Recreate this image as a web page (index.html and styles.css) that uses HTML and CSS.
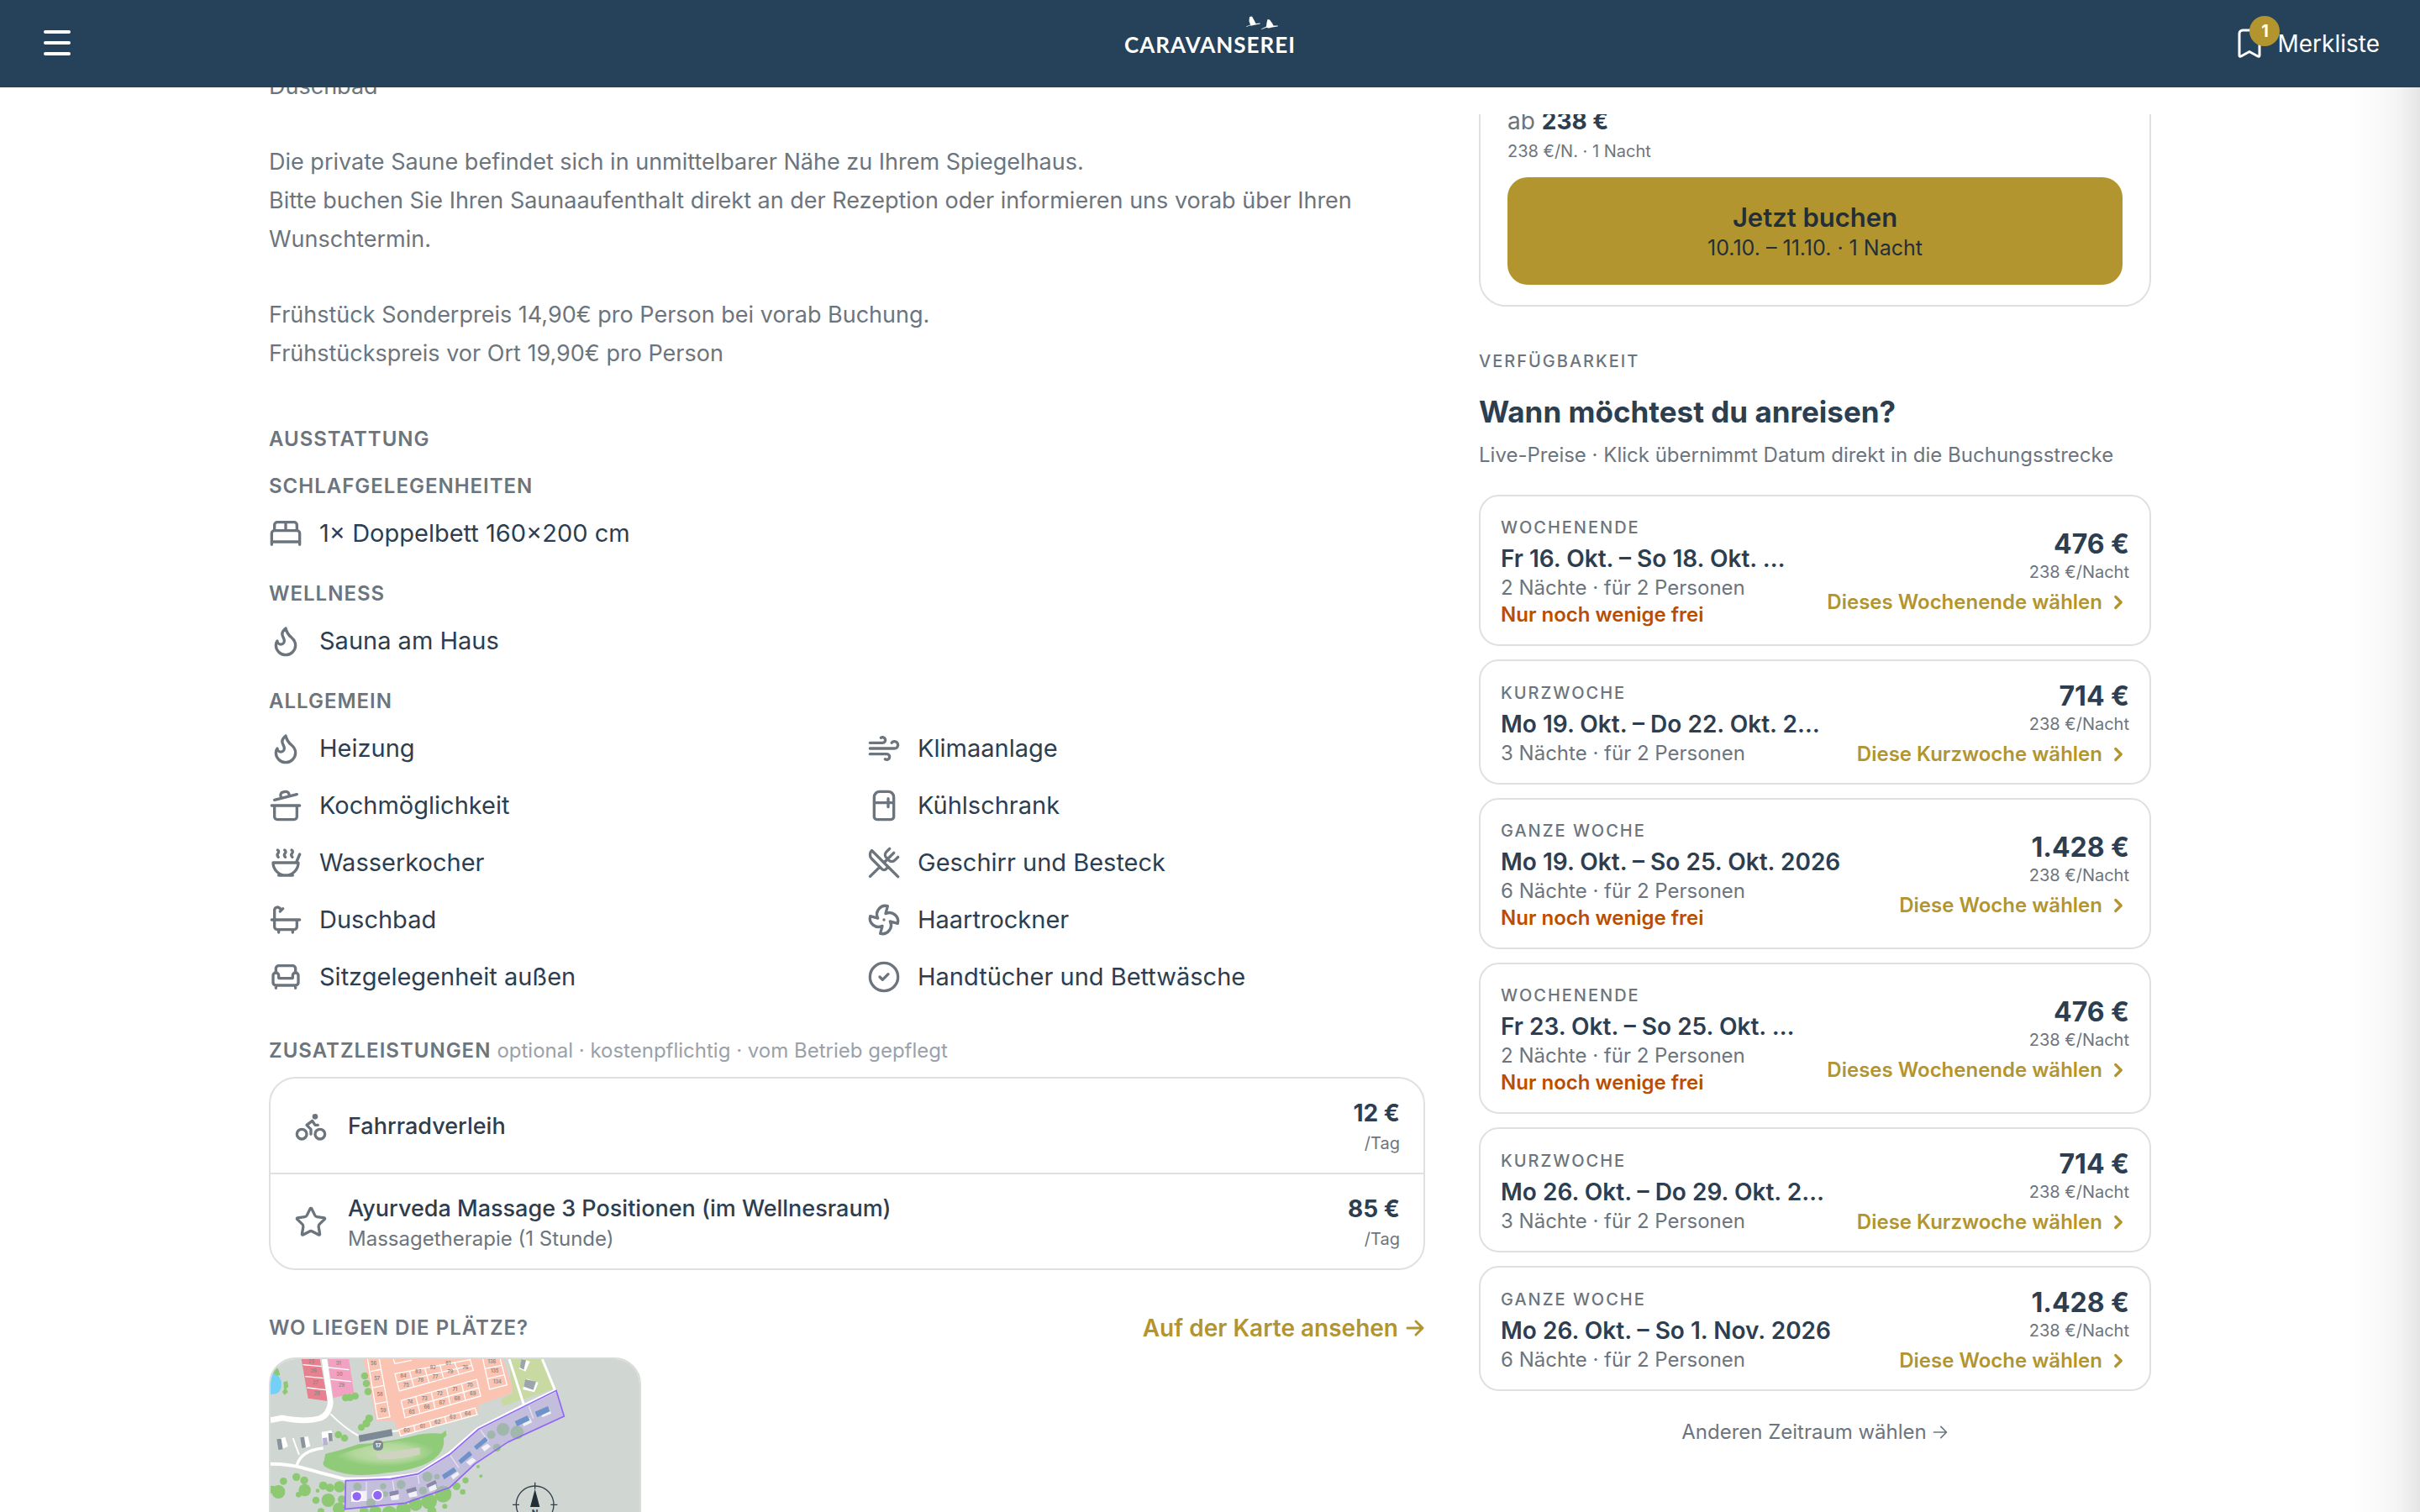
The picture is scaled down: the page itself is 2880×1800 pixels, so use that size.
FILE: index.html
```html
<!DOCTYPE html>
<html lang="de">
<head>
<meta charset="utf-8">
<meta name="viewport" content="width=device-width, initial-scale=1">
<title>Spiegelhaus – Caravanserei</title>
<link rel="stylesheet" href="styles.css">
</head>
<body>
<svg class="sprite" aria-hidden="true">
  <symbol id="bed" viewBox="0 0 24 24"><path d="M2 20v-8a2 2 0 0 1 2-2h16a2 2 0 0 1 2 2v8M4 10V6a2 2 0 0 1 2-2h12a2 2 0 0 1 2 2v4M12 4v6M2 18h20"/></symbol>
  <symbol id="flame" viewBox="0 0 24 24"><path d="M12 3q1 4 4 6.5t3 5.5a1 1 0 0 1-14 0 5 5 0 0 1 1-3 1 1 0 0 0 5 0c0-2-1.5-3-1.5-5q0-2 2.5-4"/></symbol>
  <symbol id="pot" viewBox="0 0 24 24"><path d="M2 12h20M20 12v8a2 2 0 0 1-2 2H6a2 2 0 0 1-2-2v-8M4 8l16-4M8.86 6.78l-.45-1.81a2 2 0 0 1 1.45-2.43l1.94-.48a2 2 0 0 1 2.43 1.46l.45 1.8"/></symbol>
  <symbol id="soup" viewBox="0 0 24 24"><path d="M12 21a9 9 0 0 0 9-9H3a9 9 0 0 0 9 9ZM7 21h10M19.5 12 22 6M16.25 3c.27.1.8.53.75 1.36-.06.83-.93 1.2-1 2.02-.05.78.34 1.24.73 1.62M11.25 3c.27.1.8.53.74 1.36-.05.83-.93 1.2-.98 2.02-.06.78.33 1.24.72 1.62M6.25 3c.27.1.8.53.75 1.36-.06.83-.93 1.2-1 2.02-.05.78.34 1.24.74 1.62"/></symbol>
  <symbol id="bath" viewBox="0 0 24 24"><path d="M10 4 8 6M17 19v2M2 12h20M7 19v2M9 5 7.621 3.621A2.121 2.121 0 0 0 4 5v12a2 2 0 0 0 2 2h12a2 2 0 0 0 2-2v-5"/></symbol>
  <symbol id="armchair" viewBox="0 0 24 24"><path d="M19 9V6a2 2 0 0 0-2-2H7a2 2 0 0 0-2 2v3M3 16a2 2 0 0 0 2 2h14a2 2 0 0 0 2-2v-5a2 2 0 0 0-4 0v1.5a.5.5 0 0 1-.5.5h-9a.5.5 0 0 1-.5-.5V11a2 2 0 0 0-4 0zM5 18v2M19 18v2"/></symbol>
  <symbol id="wind" viewBox="0 0 24 24"><path d="M12.8 19.6A2 2 0 1 0 14 16H2M17.5 8a2.5 2.5 0 1 1 2 4H2M9.8 4.4A2 2 0 1 1 11 8H2"/></symbol>
  <symbol id="fridge" viewBox="0 0 24 24"><path d="M5 6a4 4 0 0 1 4-4h6a4 4 0 0 1 4 4v14a2 2 0 0 1-2 2H7a2 2 0 0 1-2-2ZM5 10h14M15 7v6"/></symbol>
  <symbol id="cutlery" viewBox="0 0 24 24"><path d="m16 2-2.3 2.3a3 3 0 0 0 0 4.2l1.8 1.8a3 3 0 0 0 4.2 0L22 8M15 15 3.3 3.3a4.2 4.2 0 0 0 0 6l7.3 7.3c.7.7 2 .7 2.8 0L15 15Zm0 0 7 7M2.1 21.8l6.4-6.3M19 5l-7 7"/></symbol>
  <symbol id="fan" viewBox="0 0 24 24"><path d="M10.827 16.379a6.082 6.082 0 0 1-8.618-7.002l5.412 1.45a6.082 6.082 0 0 1 7.002-8.618l-1.45 5.412a6.082 6.082 0 0 1 8.618 7.002l-5.412-1.45a6.082 6.082 0 0 1-7.002 8.618l1.45-5.412ZM12 12v.01"/></symbol>
  <symbol id="check" viewBox="0 0 24 24"><circle cx="12" cy="12" r="10"/><path d="m9 12 2 2 4-4"/></symbol>
  <symbol id="bike" viewBox="0 0 24 24"><circle cx="18.5" cy="17.5" r="3.5"/><circle cx="5.5" cy="17.5" r="3.5"/><circle cx="15" cy="5" r="1"/><path d="M12 17.5V14l-3-3 4-3 2 3h2"/></symbol>
  <symbol id="star" viewBox="0 0 24 24"><path d="M11.525 2.295a.53.53 0 0 1 .95 0l2.31 4.679a2.123 2.123 0 0 0 1.595 1.16l5.166.756a.53.53 0 0 1 .294.904l-3.736 3.638a2.123 2.123 0 0 0-.611 1.878l.882 5.14a.53.53 0 0 1-.771.56l-4.618-2.428a2.122 2.122 0 0 0-1.973 0L6.396 21.01a.53.53 0 0 1-.77-.56l.881-5.139a2.122 2.122 0 0 0-.611-1.879L2.16 9.795a.53.53 0 0 1 .294-.906l5.165-.755a2.122 2.122 0 0 0 1.597-1.16z"/></symbol>
  <symbol id="chevron" viewBox="0 0 24 24"><path d="m9 18 6-6-6-6"/></symbol>
  <symbol id="arrow" viewBox="0 0 24 24"><path d="M3 12h18M13 4l8 8-8 8"/></symbol>
</svg>

<header class="topbar">
  <button class="menu-button" type="button" aria-label="Menü">
    <svg class="menu-icon" viewBox="0 0 40 40"><path d="M6 6h28M6 19h28M6 32h28"/></svg>
  </button>
  <a class="logo" href="#">
    <svg class="cranes" viewBox="0 0 40 16" aria-hidden="true">
      <path d="M1 12.500 6 10.500 4.500 6 5 1 8 .5 10.500 5 12.500 9 18 8.500 17.500 9.500 12 10.500 8 11.500 5 11.500 1.500 13Z"/>
      <path d="M19 15.500 25 12.500 25.500 8 26.500 4 29 4.500 32 8.500 33.500 11.500 39 11.500 38.500 12.500 32 13.500 28 14.500 25 13.800 19.500 16Z"/>
    </svg>
    <span class="wordmark">CARAVANSEREI</span>
  </a>
  <a class="watchlist" href="#">
    <span class="bookmark">
      <svg viewBox="0 0 28 36" aria-hidden="true"><path d="M2 6a4 4 0 0 1 4-4h16a4 4 0 0 1 4 4v26q0 2-2 1l-10-5.500L4 33q-2 1-2-1Z"/></svg>
      <span class="badge">1</span>
    </span>
    <span>Merkliste</span>
  </a>
</header>

<main class="page">
  <section class="details">
    <div class="description">
      <p>Duschbad</p>
      <p>Die private Saune befindet sich in unmittelbarer Nähe zu Ihrem Spiegelhaus.<br>Bitte buchen Sie Ihren Saunaaufenthalt direkt an der Rezeption oder informieren uns vorab über Ihren Wunschtermin.</p>
      <p>Frühstück Sonderpreis 14,90€ pro Person bei vorab Buchung.<br>Frühstückspreis vor Ort 19,90€ pro Person</p>
    </div>

    <section class="amenities">
      <h2 class="caps">AUSSTATTUNG</h2>
      <h3 class="caps">SCHLAFGELEGENHEITEN</h3>
      <ul class="features">
        <li><svg class="icon"><use href="#bed"/></svg>1× Doppelbett 160×200 cm</li>
      </ul>
      <h3 class="caps">WELLNESS</h3>
      <ul class="features">
        <li><svg class="icon"><use href="#flame"/></svg>Sauna am Haus</li>
      </ul>
      <h3 class="caps">ALLGEMEIN</h3>
      <ul class="features">
        <li><svg class="icon"><use href="#flame"/></svg>Heizung</li>
        <li><svg class="icon"><use href="#wind"/></svg>Klimaanlage</li>
        <li><svg class="icon"><use href="#pot"/></svg>Kochmöglichkeit</li>
        <li><svg class="icon"><use href="#fridge"/></svg>Kühlschrank</li>
        <li><svg class="icon"><use href="#soup"/></svg>Wasserkocher</li>
        <li><svg class="icon"><use href="#cutlery"/></svg>Geschirr und Besteck</li>
        <li><svg class="icon"><use href="#bath"/></svg>Duschbad</li>
        <li><svg class="icon"><use href="#fan"/></svg>Haartrockner</li>
        <li><svg class="icon"><use href="#armchair"/></svg>Sitzgelegenheit außen</li>
        <li><svg class="icon"><use href="#check"/></svg>Handtücher und Bettwäsche</li>
      </ul>
    </section>

    <section class="extras">
      <h2 class="caps">ZUSATZLEISTUNGEN <span class="note">optional · kostenpflichtig · vom Betrieb gepflegt</span></h2>
      <ul class="extras-list">
        <li>
          <svg class="icon"><use href="#bike"/></svg>
          <div class="extra-text"><strong>Fahrradverleih</strong></div>
          <div class="extra-price"><b>12 €</b><small>/Tag</small></div>
        </li>
        <li>
          <svg class="icon"><use href="#star"/></svg>
          <div class="extra-text"><strong>Ayurveda Massage 3 Positionen (im Wellnesraum)</strong><span>Massagetherapie (1 Stunde)</span></div>
          <div class="extra-price"><b>85 €</b><small>/Tag</small></div>
        </li>
      </ul>
    </section>

    <section class="location">
      <div class="location-head">
        <h2 class="caps">WO LIEGEN DIE PLÄTZE?</h2>
        <a href="#">Auf der Karte ansehen <svg class="arrow"><use href="#arrow"/></svg></a>
      </div>
      <a class="map" href="#" aria-label="Lageplan">
        <svg viewBox="66 234 1317 900" aria-hidden="true">
          <defs>
            <radialGradient id="meadow"><stop offset="0" stop-color="#c3dcae"/><stop offset=".6" stop-color="#b3d79c"/><stop offset="1" stop-color="#8fcb78"/></radialGradient>
          </defs>
          <rect x="66" y="234" width="1317" height="900" fill="#d0d7d2"/>
          <!-- pond -->
          <path d="M66 268q30 20 38 45 4 30-12 42-12 6-26 4Z" fill="#74d0f7"/>
          <path d="M66 262l20-4 10 18 4 16-12 0-22-12ZM112 316l14-4 4 20-8 8 6 12-12 10-8-10 6-10Z" fill="#8dc873"/>
          <!-- red and pink pitches -->
          <path d="M176 234h66l28 150-70-10Z" fill="#e8818f"/>
          <path d="M270 234h76l18 122-74 16Z" fill="#f3a1c2"/>
          <path d="M182 254l66 6M190 296l64 6M196 336l68 8M272 264l74 8M280 306l74 8" stroke="#fff" stroke-width="4"/>
          <!-- orange field -->
          <path d="M398 234H896L928 330Q932 352 912 362L806 398 808 424 796 436 524 510 508 452 444 454Z" fill="#fac3b2"/>
          <g fill="none" stroke="#fff" stroke-width="4">
            <path d="M412 234 448 448 492 440 454 234M424 278 462 270M432 336 472 328M440 394 482 386"/>
            <path d="M504 234 510 250 570 238M510 286 778 236 790 274 526 348ZM518 316 784 256M562 276 578 334M616 264 632 318M670 252 684 304M722 244 740 290"/>
            <path d="M532 382 802 306 816 366 546 444ZM540 412 810 336M584 368 600 428M640 352 654 414M694 336 708 398M748 322 762 380"/>
            <path d="M524 486 796 408 804 432 530 508ZM578 472 582 494M634 456 640 478M688 440 694 462M742 424 750 448"/>
            <path d="M824 234 848 342 910 326 886 234M832 268 892 256M840 304 902 290"/>
          </g>
          <g font-family="Inter, sans-serif" font-size="17" font-weight="600" fill="#8a8482" text-anchor="middle">
            <text x="434" y="254">56</text><text x="446" y="308">57</text><text x="456" y="366">58</text><text x="468" y="422">59</text>
            <text x="540" y="300">84</text><text x="593" y="284">83</text><text x="646" y="269">82</text><text x="700" y="256">81</text>
            <text x="550" y="332">75</text><text x="602" y="316">78</text><text x="654" y="302">77</text><text x="708" y="286">79</text><text x="762" y="271">76</text>
            <text x="564" y="394">74</text><text x="616" y="380">73</text><text x="670" y="364">72</text><text x="724" y="348">71</text><text x="778" y="334">70</text>
            <text x="570" y="428">65</text><text x="624" y="412">66</text><text x="678" y="396">67</text><text x="732" y="380">68</text><text x="788" y="364">69</text>
            <text x="552" y="495">60</text><text x="608" y="480">61</text><text x="662" y="464">62</text><text x="716" y="448">63</text><text x="770" y="434">64</text>
            <text x="856" y="250">136</text><text x="866" y="282">135</text><text x="876" y="320">134</text>
            <text x="212" y="250">25</text><text x="220" y="282">26</text><text x="226" y="324">27</text><text x="232" y="364">28</text>
            <text x="308" y="256">31</text><text x="312" y="294">30</text><text x="320" y="332">29</text>
          </g>
          <!-- lime area -->
          <path d="M916 234H1036L1078 340 896 402 888 378 930 356Z" fill="#c8d9a1"/>
          <path d="M954 268 966 234 992 242 976 278ZM966 342 980 304 1022 318 1008 352Z" fill="#fff"/>
          <path d="M956 264 962 234 978 238 970 272ZM976 306 1014 314 1004 344 970 332Z" fill="#9ba5ac"/>
          <!-- roads -->
          <g fill="none" stroke="#fff">
            <path d="M258 234 280 390Q274 436 240 446 190 460 108 444L66 452" stroke-width="20"/>
            <path d="M280 430Q330 480 380 508M500 492l22-2M146 516l22 60" stroke-width="6"/>
            <path d="M66 608Q130 608 180 622T330 662Q480 664 592 644L706 570 804 484 970 400 1084 346" stroke-width="12"/>
            <path d="M160 612Q176 560 254 552" stroke-width="10"/>
            <path d="M918 234 970 396M1036 234 1082 346" stroke-width="9"/>
          </g>
          <!-- meadow with service building -->
          <path d="M262 572Q320 560 380 538 480 530 560 512 620 494 676 500L692 488 694 506 684 516Q690 560 650 590 600 628 480 640 380 656 320 640 240 620 256 600Z" fill="#8fcb78"/>
          <path d="M292 582Q420 534 560 520 660 510 656 548 640 600 500 616 360 626 292 582Z" fill="url(#meadow)"/>
          <path d="M438 574Q520 560 598 550L600 574Q540 594 452 592Z" fill="#cfd3bf"/>
          <path d="M380 506 498 484 502 508 384 530Z" fill="#7d8994"/>
          <rect x="432" y="524" width="36" height="36" rx="14" fill="#7d8994"/>
          <text x="450" y="549" font-family="Inter, sans-serif" font-size="20" font-weight="700" fill="#fff" text-anchor="middle">17</text>
          <!-- small houses -->
          <path d="M96 520l22-8 10 34-22 10ZM176 514l24-4 8 36-24 6ZM248 494l36-6 6 34-38 14Z" fill="#fff"/>
          <path d="M88 520l16-2 6 38-16 2ZM172 514l14-2 6 38-14 2ZM272 498l14 0 2 28-14 2Z" fill="#8b949c"/>
          <path d="M252 516l16-2 2 26-16 2Z" fill="#b7b1d3"/>
          <!-- trees -->
          <g fill="#8dc873">
            <circle cx="402" cy="294" r="13"/><circle cx="408" cy="321" r="13"/><circle cx="414" cy="350" r="13"/>
            <circle cx="334" cy="372" r="13"/><circle cx="350" cy="371" r="13"/><circle cx="368" cy="366" r="13"/>
            <circle cx="418" cy="446" r="14"/><circle cx="408" cy="464" r="14"/><circle cx="390" cy="478" r="12"/>
            <circle cx="308" cy="504" r="13"/><circle cx="330" cy="516" r="13"/>
            <circle cx="158" cy="655" r="14"/><circle cx="112" cy="670" r="13"/><circle cx="186" cy="667" r="14"/><circle cx="94" cy="708" r="24"/><circle cx="72" cy="700" r="14"/>
            <circle cx="188" cy="702" r="22"/><circle cx="166" cy="718" r="10"/><circle cx="228" cy="738" r="13"/><circle cx="254" cy="686" r="15"/><circle cx="278" cy="694" r="15"/><circle cx="272" cy="738" r="24"/><circle cx="312" cy="690" r="20"/><circle cx="320" cy="735" r="14"/><circle cx="234" cy="704" r="7"/>
            <circle cx="246" cy="778" r="12"/><circle cx="310" cy="768" r="22"/><circle cx="400" cy="776" r="16"/><circle cx="440" cy="780" r="22"/><circle cx="490" cy="784" r="26"/><circle cx="540" cy="772" r="26"/><circle cx="584" cy="752" r="24"/><circle cx="632" cy="742" r="28"/><circle cx="682" cy="716" r="30"/><circle cx="642" cy="776" r="16"/><circle cx="688" cy="760" r="9"/>
            <circle cx="730" cy="688" r="14"/><circle cx="762" cy="667" r="11"/><circle cx="752" cy="708" r="10"/><circle cx="807" cy="618" r="6"/><circle cx="817" cy="652" r="6"/>
            <circle cx="854" cy="504" r="15"/><circle cx="896" cy="485" r="23"/><circle cx="946" cy="496" r="24"/><circle cx="874" cy="550" r="14"/>
            <circle cx="376" cy="690" r="15"/><circle cx="424" cy="748" r="17"/><circle cx="468" cy="688" r="11"/><circle cx="476" cy="716" r="10"/><circle cx="532" cy="682" r="16"/><circle cx="626" cy="654" r="18"/><circle cx="610" cy="704" r="14"/><circle cx="660" cy="654" r="10"/><circle cx="650" cy="690" r="12"/>
          </g>
          <!-- highlighted row of pitches -->
          <path d="M334 668 494 662 592 644 706 574 808 484 1086 346 1114 438 914 530 796 608 706 692 548 748 332 770Z" fill="#b6a5e6" fill-opacity=".5" stroke="#9166f4" stroke-width="5"/>
          <path d="M408 672v34M502 668l6 40M592 648l4 32M708 578l30 44M816 488l28 40M988 402l16 44" stroke="#e5e2f2" stroke-width="4"/>
          <g fill="#f3f1f8"><path d="M1030 424l32-14 6 18-32 14ZM962 456l30-12 8 16-30 14ZM818 550l22-14 12 10-22 18ZM764 602l22-16 14 10-22 18ZM710 652l24-16 6 10-22 18ZM630 690l24-12 6 20-26 10ZM556 710l30-8 4 22-28 4ZM492 718l32-6 0 24-26 2ZM354 708l56-4 0 36-56 4Z"/></g>
          <g fill="#6f93c9"><path d="M1010 422l46-20 8 18-46 22ZM938 456l44-20 10 16-46 22ZM792 546l40-34 10 12-40 34ZM736 596l40-34 10 14-40 32ZM678 648l42-28 10 14-44 30Z"/></g>
          <g fill="#8a8aa8"><path d="M622 682l32-16 6 12-34 16ZM550 700l34-10 4 14-34 10ZM490 708l32-6 2 14-32 8Z"/></g>
          <g fill="#9166f4" stroke="#fff" stroke-width="5"><circle cx="374" cy="724" r="18"/><circle cx="448" cy="720" r="18"/></g>
          <!-- compass -->
          <g fill="none" stroke="#34424d" stroke-width="4"><circle cx="1010" cy="754" r="67"/><path d="M1010 674v24M930 754h24M1066 754h24M1010 810v24"/></g>
          <path d="M1010 698 1027 762H993Z" fill="#232f38"/>
          <text x="1010" y="796" font-family="Inter, sans-serif" font-size="30" font-weight="700" fill="#34424d" text-anchor="middle">N</text>
        </svg>
      </a>
    </section>
  </section>

  <aside class="booking">
    <div class="offer">
      <p class="from">ab <b>238 €</b></p>
      <p class="rate">238 €/N. · 1 Nacht</p>
      <button class="book" type="button"><strong>Jetzt buchen</strong><span>10.10. – 11.10. · 1 Nacht</span></button>
    </div>

    <section class="availability">
      <p class="eyebrow">VERFÜGBARKEIT</p>
      <h2>Wann möchtest du anreisen?</h2>
      <p class="hint">Live-Preise · Klick übernimmt Datum direkt in die Buchungsstrecke</p>

      <div class="slots">
        <a class="slot" href="#">
          <div class="slot-info"><span class="kind">WOCHENENDE</span><strong>Fr 16. Okt. – So 18. Okt. 2026</strong><span>2 Nächte · für 2 Personen</span><em>Nur noch wenige frei</em></div>
          <div class="slot-price"><b>476 €</b><small>238 €/Nacht</small><span class="choose">Dieses Wochenende wählen<svg><use href="#chevron"/></svg></span></div>
        </a>
        <a class="slot" href="#">
          <div class="slot-info"><span class="kind">KURZWOCHE</span><strong>Mo 19. Okt. – Do 22. Okt. 2026</strong><span>3 Nächte · für 2 Personen</span></div>
          <div class="slot-price"><b>714 €</b><small>238 €/Nacht</small><span class="choose">Diese Kurzwoche wählen<svg><use href="#chevron"/></svg></span></div>
        </a>
        <a class="slot" href="#">
          <div class="slot-info"><span class="kind">GANZE WOCHE</span><strong>Mo 19. Okt. – So 25. Okt. 2026</strong><span>6 Nächte · für 2 Personen</span><em>Nur noch wenige frei</em></div>
          <div class="slot-price"><b>1.428 €</b><small>238 €/Nacht</small><span class="choose">Diese Woche wählen<svg><use href="#chevron"/></svg></span></div>
        </a>
        <a class="slot" href="#">
          <div class="slot-info"><span class="kind">WOCHENENDE</span><strong>Fr 23. Okt. – So 25. Okt. 2026</strong><span>2 Nächte · für 2 Personen</span><em>Nur noch wenige frei</em></div>
          <div class="slot-price"><b>476 €</b><small>238 €/Nacht</small><span class="choose">Dieses Wochenende wählen<svg><use href="#chevron"/></svg></span></div>
        </a>
        <a class="slot" href="#">
          <div class="slot-info"><span class="kind">KURZWOCHE</span><strong>Mo 26. Okt. – Do 29. Okt. 2026</strong><span>3 Nächte · für 2 Personen</span></div>
          <div class="slot-price"><b>714 €</b><small>238 €/Nacht</small><span class="choose">Diese Kurzwoche wählen<svg><use href="#chevron"/></svg></span></div>
        </a>
        <a class="slot" href="#">
          <div class="slot-info"><span class="kind">GANZE WOCHE</span><strong>Mo 26. Okt. – So 1. Nov. 2026</strong><span>6 Nächte · für 2 Personen</span></div>
          <div class="slot-price"><b>1.428 €</b><small>238 €/Nacht</small><span class="choose">Diese Woche wählen<svg><use href="#chevron"/></svg></span></div>
        </a>
      </div>
      <a class="other" href="#">Anderen Zeitraum wählen <svg class="arrow"><use href="#arrow"/></svg></a>
    </section>
  </aside>
</main>
<div class="edge-shade"></div>
</body>
</html>
```
FILE: styles.css
```css
:root {
  --navy: #25425a;
  --ink: #2c3e50;
  --muted: #6c757d;
  --faint: #9aa1a8;
  --gold: #b39530;
  --alert: #bb4d00;
  --line: #dfe0e0;
}

* { box-sizing: border-box; }

body {
  margin: 0;
  height: 100vh;
  overflow: hidden;
  background: #fff;
  color: var(--ink);
  font-family: Inter, "Liberation Sans", sans-serif;
  font-size: 27px;
}

h2, h3, p, ul { margin: 0; padding: 0; }
ul { list-style: none; }
a { color: inherit; text-decoration: none; }
button { border: 0; font: inherit; cursor: pointer; }
svg { fill: none; stroke: currentColor; stroke-width: 2; stroke-linecap: round; stroke-linejoin: round; }
.sprite { display: none; }

/* Top bar */
.topbar {
  position: fixed;
  inset: 0 0 auto;
  z-index: 2;
  display: grid;
  grid-template-columns: 1fr auto 1fr;
  align-items: center;
  height: 104px;
  padding: 0 48px;
  background: var(--navy);
  color: #fff;
}
.menu-button { justify-self: start; display: flex; padding: 0; background: none; color: inherit; }
.menu-icon { width: 40px; height: 40px; stroke-width: 4; }
.logo { display: flex; flex-direction: column; align-items: center; padding-bottom: 16px; }
.cranes { align-self: flex-end; width: 40px; height: 16px; margin-right: 20px; fill: currentColor; stroke: none; }
.wordmark { font: 700 26px/32px Lato, sans-serif; letter-spacing: 1px; margin-top: 2px; }
.watchlist { justify-self: end; display: flex; align-items: center; gap: 19px; font-size: 28px; line-height: 40px; }
.bookmark { position: relative; display: flex; }
.bookmark svg { width: 28px; height: 36px; stroke-width: 3; }
.badge {
  position: absolute;
  top: -15px;
  left: 14px;
  width: 36px;
  border-radius: 50%;
  background: var(--gold);
  font-size: 20px;
  font-weight: 700;
  line-height: 36px;
  text-align: center;
}

/* Page columns */
.page {
  display: grid;
  grid-template-columns: minmax(0, 43fr) minmax(0, 25fr);
  gap: 64px;
  align-items: start;
  max-width: 2240px;
  margin: 0 auto;
}
.details { padding-top: 80px; }

.description { display: grid; gap: 44px; color: var(--muted); line-height: 46px; }

.caps { color: var(--muted); font-size: 24px; font-weight: 600; letter-spacing: 1px; line-height: 32px; }
.amenities { margin-top: 63px; }
.amenities h2 { margin-bottom: 24px; }
.features {
  display: grid;
  grid-template-columns: 1fr 1fr;
  gap: 24px 48px;
  margin: 18px 0 34px;
  font-size: 29px;
  line-height: 44px;
}
.features:last-child { margin-bottom: 0; }
.features li { display: flex; align-items: center; gap: 20px; }
.icon { flex: none; width: 40px; height: 40px; color: var(--muted); }

.extras { margin-top: 50px; }
.note { color: var(--faint); font-weight: 400; letter-spacing: normal; }
.extras-list { margin-top: 15px; border: 2px solid var(--line); border-radius: 32px; }
.extras-list li { display: flex; align-items: center; gap: 24px; padding: 21px 28px 19px; }
.extras-list li + li { border-top: 2px solid var(--line); }
.extra-text { flex: 1; display: grid; }
.extra-text strong { font-weight: 500; line-height: 40px; }
.extra-text span { color: var(--muted); font-size: 24px; line-height: 32px; }
.extra-price { display: grid; text-align: right; }
.extra-price b { font-size: 28px; font-weight: 700; line-height: 40px; }
.extra-price small { color: var(--muted); font-size: 20px; line-height: 32px; }

.location { margin-top: 49px; }
.location-head { display: flex; justify-content: space-between; align-items: center; }
.location-head a { display: flex; align-items: center; gap: 8px; color: var(--gold); font-weight: 600; font-size: 28px; line-height: 40px; }
.arrow { width: 24px; height: 24px; }
.location-head .arrow { stroke-width: 3; }
.map {
  display: block;
  width: 443px;
  max-width: 100%;
  margin-top: 15px;
  overflow: hidden;
  border: 2px solid #d9dbdb;
  border-radius: 32px;
}
.map svg { display: block; width: 100%; stroke: none; }
.map g, .map path { stroke-linecap: butt; stroke-linejoin: miter; }

/* Booking column */
.booking { margin-top: 136px; overflow: hidden; }
.offer { margin-top: -46px; padding: 32px 32px 24px; border: 2px solid var(--line); border-radius: 32px; }
.from { color: var(--muted); font-size: 28px; line-height: 40px; }
.from b { color: var(--ink); }
.rate { color: var(--muted); font-size: 20px; line-height: 32px; }
.book {
  display: grid;
  width: 100%;
  margin-top: 15px;
  padding: 28px;
  border-radius: 24px;
  background: var(--gold);
  color: #232f38;
  text-align: center;
}
.book strong { font-size: 31px; font-weight: 600; line-height: 40px; }
.book span { font-size: 25px; line-height: 32px; }

.availability { margin-top: 51px; }
.eyebrow { color: var(--muted); font-size: 20px; font-weight: 500; letter-spacing: 2px; line-height: 28px; }
.availability h2 { margin: 24px 0 14px; font-size: 35px; line-height: 44px; }
.hint { color: var(--muted); font-size: 24px; line-height: 32px; }
.slots { display: grid; gap: 16px; margin-top: 31px; }
.slot {
  display: flex;
  align-items: center;
  justify-content: space-between;
  gap: 36px;
  min-height: 149px;
  padding: 21px 24px 19px;
  border: 2px solid var(--line);
  border-radius: 24px;
}
.slot-info { display: grid; min-width: 0; color: var(--muted); font-size: 24px; line-height: 32px; }
.kind { margin-bottom: 2px; font-size: 20px; font-weight: 500; letter-spacing: 2px; line-height: 32px; }
.slot-info strong { overflow: hidden; color: var(--ink); font-size: 28px; font-weight: 600; line-height: 38px; text-overflow: ellipsis; white-space: nowrap; }
.slot-info em { color: var(--alert); font-style: normal; font-weight: 600; }
.slot-price { flex: none; display: grid; text-align: right; }
.slot-price b { font-size: 32px; line-height: 40px; }
.slot-price small { color: var(--muted); font-size: 20px; line-height: 26px; }
.choose { display: flex; align-items: center; justify-content: flex-end; gap: 6px; margin-top: 8px; color: var(--gold); font-size: 24px; font-weight: 600; line-height: 30px; }
.choose svg { width: 26px; height: 26px; stroke-width: 3; }
.other { display: flex; align-items: center; justify-content: center; gap: 6px; margin-top: 33px; color: var(--muted); font-size: 24px; line-height: 32px; }
.other .arrow { width: 20px; height: 20px; }

.edge-shade {
  position: fixed;
  inset: 104px 0 0 auto;
  width: 88px;
  background: linear-gradient(to right, rgb(0 0 0 / 0), rgb(0 0 0 / .02) 45%, rgb(0 0 0 / .045) 70%, rgb(0 0 0 / .1));
}
```
